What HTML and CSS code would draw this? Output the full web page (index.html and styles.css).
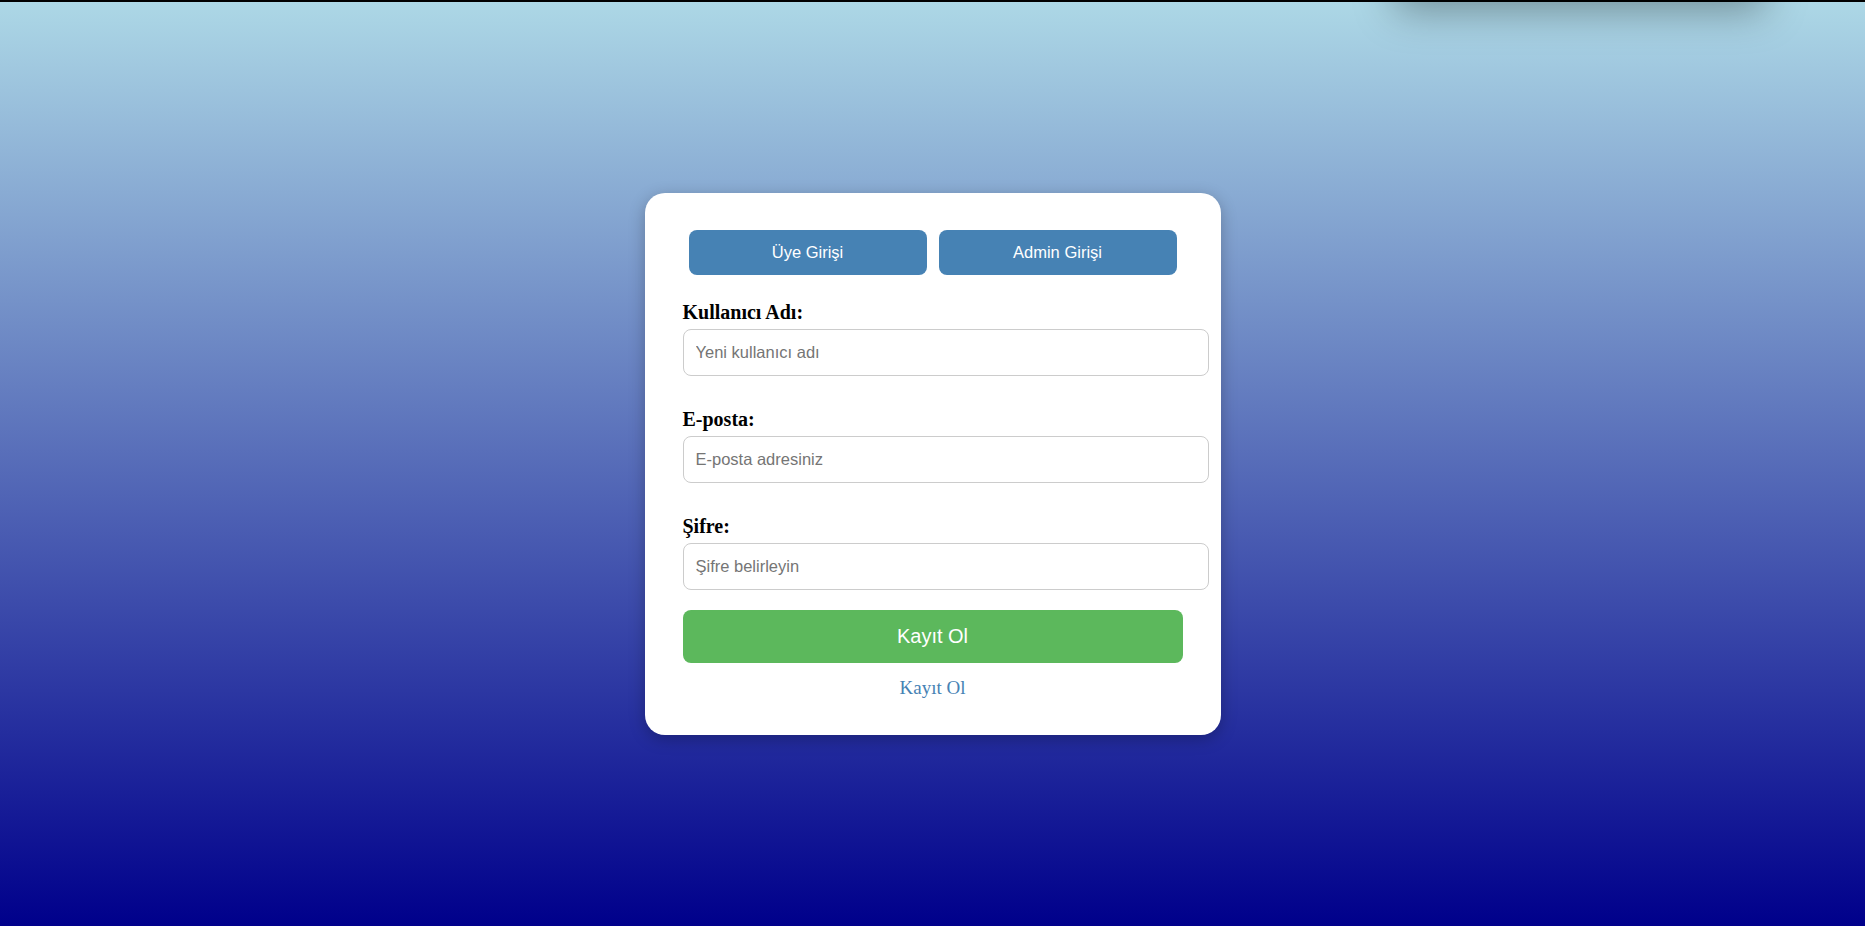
FILE: index.html
```html
<!DOCTYPE html>
<html lang="tr">
<head>
<meta charset="utf-8">
<title>Kayıt Ol</title>
<link rel="stylesheet" href="styles.css">
</head>
<body>
<div class="topline"></div>
<div class="toast"></div>
<main class="page">
  <div class="card">
    <div class="tabs">
      <button class="tab">Üye Girişi</button>
      <button class="tab">Admin Girişi</button>
    </div>
    <form class="form">
      <div class="group">
        <label class="label">Kullanıcı Adı:</label>
        <input class="input" type="text" placeholder="Yeni kullanıcı adı">
      </div>
      <div class="group">
        <label class="label">E-posta:</label>
        <input class="input" type="email" placeholder="E-posta adresiniz">
      </div>
      <div class="group last">
        <label class="label">Şifre:</label>
        <input class="input" type="password" placeholder="Şifre belirleyin">
      </div>
      <button type="button" class="submit">Kayıt Ol</button>
    </form>
    <p class="switch"><a class="link">Kayıt Ol</a></p>
  </div>
</main>
</body>
</html>
```

FILE: styles.css
```css
html, body {
  margin: 0;
  padding: 0;
  height: 100%;
}
body {
  background: linear-gradient(to bottom, #add8e6, #00008b);
  font-family: "Liberation Serif", "Times New Roman", serif;
  position: relative;
  overflow: hidden;
}
.topline {
  height: 2px;
  background: #000;
  position: relative;
  z-index: 5;
}
.toast {
  position: absolute;
  top: -60px;
  left: 1395px;
  width: 370px;
  height: 60px;
  background: #8aaab8;
  box-shadow: 0 10px 40px rgba(0, 0, 0, 0.35);
}
.page {
  height: calc(100% - 2px);
  display: flex;
  align-items: center;
  justify-content: center;
}
.card {
  width: 500px;
  padding: 37px 38px 36px;
  background: #fff;
  border-radius: 20px;
  box-shadow: 0 4px 16px rgba(0, 0, 0, 0.25);
}
.tabs {
  display: flex;
  justify-content: center;
  gap: 12px;
  margin-bottom: 26px;
}
.tab {
  width: 238px;
  height: 45px;
  border: none;
  border-radius: 8px;
  background: #4682b4;
  color: #fff;
  font-family: "Liberation Sans", Arial, sans-serif;
  font-size: 16.5px;
  padding: 0;
}
.form {
  margin: 0;
}
.group {
  margin-bottom: 32px;
}
.group.last {
  margin-bottom: 20px;
}
.label {
  display: block;
  font-weight: bold;
  font-size: 20px;
  line-height: 23px;
  color: #000;
  margin-bottom: 5px;
}
.input {
  display: block;
  width: 100%;
  box-sizing: content-box;
  height: 21px;
  padding: 12px;
  border: 1px solid #ccc;
  border-radius: 8px;
  font-family: "Liberation Sans", Arial, sans-serif;
  font-size: 16.5px;
  line-height: 21px;
  color: #333;
  background: #fff;
  margin: 0;
}
.input::placeholder {
  color: #757575;
}
.submit {
  display: block;
  width: 100%;
  height: 53px;
  border: none;
  border-radius: 8px;
  background: #5cb85c;
  color: #fff;
  font-family: "Liberation Sans", Arial, sans-serif;
  font-size: 20px;
  padding: 0;
}
.switch {
  margin: 14px 0 0;
  text-align: center;
  font-size: 19px;
  line-height: 22px;
}
.link {
  color: #4682b4;
  text-decoration: none;
}
```
